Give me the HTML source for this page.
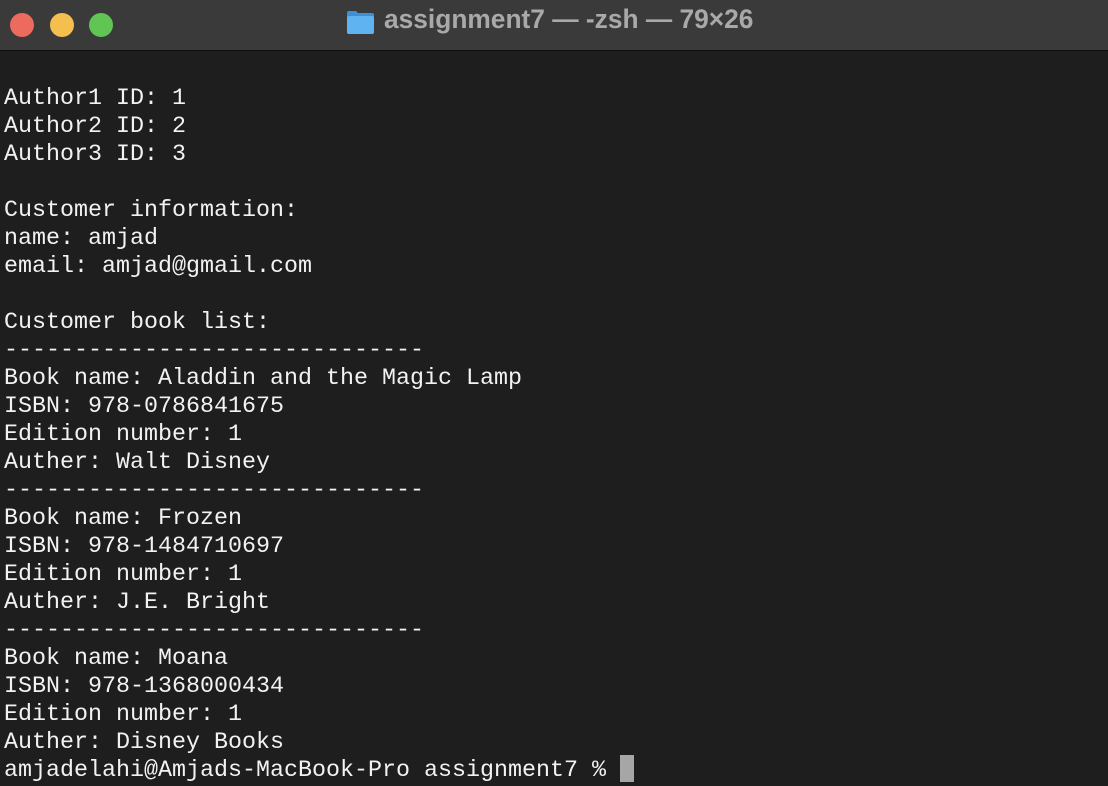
<!DOCTYPE html>
<html><head><style>
html,body{margin:0;padding:0;width:1108px;height:786px;overflow:hidden;background:#1e1e1e}
.bar{position:absolute;left:0;top:0;width:1108px;height:50px;background:#3b3a3b;border-bottom:1px solid #0d0d0d}
.dot{position:absolute;top:13px;width:24px;height:24px;border-radius:50%}
.title{position:absolute;left:384px;top:4px;font:bold 27px "Liberation Sans",sans-serif;color:#a9a9a9;white-space:nowrap;transform:scaleX(0.975);transform-origin:left}
.folder{position:absolute;left:346px;top:10px;width:29px;height:24px}
pre{position:absolute;left:4px;top:85px;margin:0;font:23.33px/28px "Liberation Mono",monospace;color:#f2f2f2}
.cur{position:absolute;left:620px;top:755px;width:14px;height:27px;background:#a6a6a6}
</style></head><body>
<div class="bar">
<div class="dot" style="left:10px;background:#ed6a5e"></div>
<div class="dot" style="left:50px;background:#f5bf4f"></div>
<div class="dot" style="left:89px;background:#61c554"></div>
<svg class="folder" viewBox="0 0 29 24"><path d="M1 3 Q1 1 3 1 H10 L12 3 H26 Q28 3 28 5 V22 Q28 24 26 24 H3 Q1 24 1 22 Z" fill="#3d8fd6"/><rect x="1" y="6" width="27" height="18" rx="2" fill="#5fb3f0"/></svg>
<div class="title">assignment7 — -zsh — 79×26</div>
</div>
<pre>Author1 ID: 1
Author2 ID: 2
Author3 ID: 3

Customer information:
name: amjad
email: amjad@gmail.com

Customer book list:
------------------------------
Book name: Aladdin and the Magic Lamp
ISBN: 978-0786841675
Edition number: 1
Auther: Walt Disney
------------------------------
Book name: Frozen
ISBN: 978-1484710697
Edition number: 1
Auther: J.E. Bright
------------------------------
Book name: Moana
ISBN: 978-1368000434
Edition number: 1
Auther: Disney Books
amjadelahi@Amjads-MacBook-Pro assignment7 %</pre>
<div class="cur"></div>
</body></html>
